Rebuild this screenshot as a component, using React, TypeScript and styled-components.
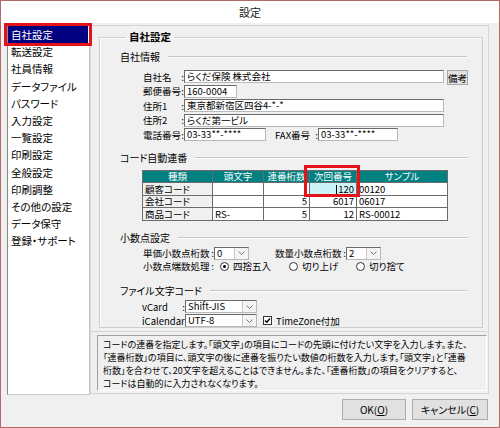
import React from "react";
import styled, { createGlobalStyle } from "styled-components";

const GlobalStyle = createGlobalStyle`
  html, body {
    margin: 0;
    padding: 0;
    background: #ffffff;
  }
  body {
    font-family: "Noto Sans CJK JP", "Noto Sans", sans-serif;
    font-size: 9.5px;
    line-height: 12px;
    color: #000;
    font-feature-settings: "palt";
  }
`;

const Window = styled.div`
  width: 500px;
  height: 428px;
  box-sizing: border-box;
  border: 1px solid #b5676a;
  background: #f0f0f0;
  display: flex;
  flex-direction: column;
`;

const TitleBar = styled.div`
  height: 22px;
  flex: none;
  background: #ffffff;
  display: flex;
  align-items: center;
  justify-content: center;
  font-size: 11px;
  color: #222;
`;

const Body = styled.div`
  display: flex;
  height: 372px;
  padding: 0 10px 0 6px;
`;

const SideList = styled.ul`
  position: relative;
  width: 83px;
  margin: 0;
  padding: 2px 0 0;
  box-sizing: border-box;
  list-style: none;
  background: #fff;
  border: 1px solid #8a8a8a;
  border-right-color: #c8c8c8;
  border-bottom-color: #c8c8c8;
  flex: none;
`;

const SideItem = styled.li<{ $active?: boolean }>`
  height: 17.2px;
  line-height: 17px;
  padding-left: 3px;
  margin-right: 1px;
  font-size: 10.5px;
  white-space: nowrap;
  background: ${({ $active }) => ($active ? "#000080" : "transparent")};
  color: ${({ $active }) => ($active ? "#fff" : "#000")};
`;

const Marker = styled.div<{ $l: number; $t: number; $w: number; $h: number }>`
  position: absolute;
  left: ${(p) => p.$l}px;
  top: ${(p) => p.$t}px;
  width: ${(p) => p.$w}px;
  height: ${(p) => p.$h}px;
  box-sizing: border-box;
  border: 3px solid #e6121a;
  pointer-events: none;
`;

const RightCol = styled.div`
  width: 399px;
  display: flex;
  flex-direction: column;
`;

const MainPanel = styled.div`
  margin-top: 2px;
  height: 307px;
  box-sizing: border-box;
  border: 1px solid #d6d6d6;
  padding: 4px 5px 4px 8px;
  display: flex;
  flex-direction: column;
`;

const GroupBox = styled.fieldset`
  flex: 1;
  margin: 0;
  min-width: 0;
  padding: 6px 15px 0 20px;
  border: 1px solid #cdcdcd;
  box-shadow: inset 1px 1px 0 #fff;
`;

const Legend = styled.legend`
  margin-left: 6px;
  padding: 0 3px;
  font-size: 10.5px;
  line-height: 14px;
  font-weight: bold;
`;

const SubHeader = styled.div<{ $mt: number }>`
  display: flex;
  align-items: center;
  height: 14px;
  margin-top: ${(p) => p.$mt}px;
  font-size: 10px;
  white-space: nowrap;
  &::after {
    content: "";
    flex: 1;
    margin-left: 8px;
    border-top: 1px solid #c4c4c4;
    border-bottom: 1px solid #ffffff;
  }
`;

const Rows = styled.div<{ $mt: number; $gap: number; $indent?: number }>`
  display: flex;
  flex-direction: column;
  gap: ${(p) => p.$gap}px;
  margin-top: ${(p) => p.$mt}px;
  padding-left: ${(p) => p.$indent ?? 23}px;
`;

const Row = styled.div<{ $h: number }>`
  display: flex;
  align-items: center;
  height: ${(p) => p.$h}px;
`;

const Label = styled.div<{ $w: number; $ml?: number }>`
  display: flex;
  justify-content: space-between;
  width: ${(p) => p.$w}px;
  margin-left: ${(p) => p.$ml ?? 0}px;
  flex: none;
  white-space: nowrap;
`;

const TextBox = styled.div<{ $w: number }>`
  width: ${(p) => p.$w}px;
  height: 13px;
  flex: none;
  box-sizing: border-box;
  background: #fff;
  border: 1px solid;
  border-color: #6a6a6a #b8b8b8 #b8b8b8 #6a6a6a;
  padding: 0 2px;
  font-size: 9.5px;
  line-height: 11px;
  white-space: nowrap;
`;

const SmallButton = styled.div`
  width: 26px;
  height: 15px;
  margin-left: 3px;
  margin-top: 2px;
  box-sizing: border-box;
  background: #e1e1e1;
  border: 1px solid #a8a8a8;
  display: flex;
  align-items: center;
  justify-content: center;
  font-size: 9.5px;
  white-space: nowrap;
`;

const TableWrap = styled.div`
  position: relative;
  margin: 5px 0 0 22px;
  width: 305px;
`;

const Grid = styled.table`
  border-collapse: collapse;
  table-layout: fixed;
  width: 305px;
`;

const Th = styled.th`
  height: 11.5px;
  padding: 0;
  background: #008080;
  color: #ffffff;
  font-weight: normal;
  font-size: 9.5px;
  line-height: 10px;
  border: 1px solid #6c6c6c;
  text-align: center;
  white-space: nowrap;
`;

const Td = styled.td<{ $align?: "left" | "right"; $bg?: string }>`
  height: 11.5px;
  padding: 0 2px;
  font-size: 9.5px;
  line-height: 10px;
  border: 1px solid #6c6c6c;
  background: ${(p) => p.$bg ?? "#fff"};
  text-align: ${(p) => p.$align ?? "left"};
  white-space: nowrap;
`;

const Caret = styled.span`
  display: inline-block;
  width: 1px;
  height: 9px;
  background: #000;
  margin-right: 1px;
  vertical-align: -1px;
`;

const Combo = styled.div<{ $w: number }>`
  width: ${(p) => p.$w}px;
  height: 13px;
  flex: none;
  box-sizing: border-box;
  display: flex;
  background: #fff;
  border: 1px solid;
  border-color: #6a6a6a #b8b8b8 #b8b8b8 #6a6a6a;
  font-size: 9.5px;
  line-height: 11px;
`;

const ComboText = styled.div`
  flex: 1;
  padding-left: 2px;
  white-space: nowrap;
`;

const ComboArrow = styled.div`
  width: 13px;
  background: #f4f4f4;
  border-left: 1px solid #c8c8c8;
  display: flex;
  align-items: center;
  justify-content: center;
`;

const Option = styled.div<{ $w: number; $ml?: number }>`
  display: flex;
  align-items: center;
  gap: 4px;
  width: ${(p) => p.$w}px;
  margin-left: ${(p) => p.$ml ?? 0}px;
  white-space: nowrap;
`;

const RadioDot = styled.span<{ $on?: boolean }>`
  width: 9px;
  height: 9px;
  box-sizing: border-box;
  border-radius: 50%;
  border: 1px solid #333;
  background: #fff;
  display: inline-flex;
  align-items: center;
  justify-content: center;
  &::after {
    content: "";
    width: 3px;
    height: 3px;
    border-radius: 50%;
    background: ${(p) => (p.$on ? "#000" : "transparent")};
  }
`;

const CheckBox = styled.span`
  width: 9px;
  height: 9px;
  box-sizing: border-box;
  border: 1px solid #333;
  background: #fff;
  display: inline-flex;
  align-items: center;
  justify-content: center;
`;

const DescPanel = styled.div`
  height: 62px;
  box-sizing: border-box;
  border: 1px solid #d6d6d6;
  border-top: none;
  padding: 3px 1px 2px 6px;
`;

const DescBox = styled.div`
  height: 100%;
  box-sizing: border-box;
  border: 1px solid;
  border-color: #a0a0a0 #ffffff #ffffff #a0a0a0;
  padding: 2px 0 0 5px;
  font-size: 9px;
  line-height: 13px;
  white-space: nowrap;
`;

const Footer = styled.div`
  flex: 1;
  display: flex;
  justify-content: flex-end;
  align-items: flex-start;
  gap: 6px;
  padding: 4px 11px 0 0;
`;

const Button = styled.div<{ $w: number }>`
  width: ${(p) => p.$w}px;
  height: 21px;
  box-sizing: border-box;
  background: #e1e1e1;
  border: 1px solid #adadad;
  display: flex;
  align-items: center;
  justify-content: center;
  font-size: 10px;
  u {
    text-decoration: underline;
  }
`;

const Chevron = () => (
  <svg width="7" height="4" viewBox="0 0 7 4">
    <path d="M0.5 0.5 L3.5 3.5 L6.5 0.5" fill="none" stroke="#777" strokeWidth="1" />
  </svg>
);

const Check = () => (
  <svg width="7" height="7" viewBox="0 0 7 7">
    <path d="M1 3.5 L2.8 5.3 L6 1.5" fill="none" stroke="#000" strokeWidth="1.4" />
  </svg>
);

const menu = [
  "自社設定",
  "転送設定",
  "社員情報",
  "データファイル",
  "パスワード",
  "入力設定",
  "一覧設定",
  "印刷設定",
  "全般設定",
  "印刷調整",
  "その他の設定",
  "データ保守",
  "登録・サポート",
];

const codes = [
  { kind: "顧客コード", prefix: "", digits: "", next: "120", sample: "00120", editing: true },
  { kind: "会社コード", prefix: "", digits: "5", next: "6017", sample: "06017" },
  { kind: "商品コード", prefix: "RS-", digits: "5", next: "12", sample: "RS-00012" },
];

const Field = ({ name }: { name: string }) => (
  <>
    <span>{name}</span>
    <span>:</span>
  </>
);

const App = () => {
  return (
    <>
      <GlobalStyle />
      <Window>
        <TitleBar>設定</TitleBar>
        <Body>
          <SideList>
            {menu.map((m, i) => (
              <SideItem key={m} $active={i === 0}>
                {m}
              </SideItem>
            ))}
            <Marker $l={-4} $t={-1} $w={88} $h={23} />
          </SideList>

          <RightCol>
            <MainPanel>
              <GroupBox>
                <Legend>自社設定</Legend>

                <SubHeader $mt={0}>自社情報</SubHeader>
                <Rows $mt={6} $gap={1}>
                  <Row $h={13.5}>
                    <Label $w={41}>
                      <Field name="自社名" />
                    </Label>
                    <TextBox $w={260}>らくだ保険 株式会社</TextBox>
                    <SmallButton>備考</SmallButton>
                  </Row>
                  <Row $h={13.5}>
                    <Label $w={41}>
                      <Field name="郵便番号" />
                    </Label>
                    <TextBox $w={53}>160-0004</TextBox>
                  </Row>
                  <Row $h={13.5}>
                    <Label $w={41}>
                      <Field name="住所1" />
                    </Label>
                    <TextBox $w={260}>東京都新宿区四谷4-*-*</TextBox>
                  </Row>
                  <Row $h={13.5}>
                    <Label $w={41}>
                      <Field name="住所2" />
                    </Label>
                    <TextBox $w={260}>らくだ第一ビル</TextBox>
                  </Row>
                  <Row $h={13.5}>
                    <Label $w={41}>
                      <Field name="電話番号" />
                    </Label>
                    <TextBox $w={82}>03-33**-****</TextBox>
                    <Label $w={43} $ml={9}>
                      <Field name="FAX番号" />
                    </Label>
                    <TextBox $w={80}>03-33**-****</TextBox>
                  </Row>
                </Rows>

                <SubHeader $mt={9}>コード自動連番</SubHeader>
                <TableWrap>
                  <Grid>
                    <colgroup>
                      <col style={{ width: 70 }} />
                      <col style={{ width: 51 }} />
                      <col style={{ width: 46 }} />
                      <col style={{ width: 47 }} />
                      <col style={{ width: 91 }} />
                    </colgroup>
                    <thead>
                      <tr>
                        <Th>種類</Th>
                        <Th>頭文字</Th>
                        <Th>連番桁数</Th>
                        <Th>次回番号</Th>
                        <Th>サンプル</Th>
                      </tr>
                    </thead>
                    <tbody>
                      {codes.map((c) => (
                        <tr key={c.kind}>
                          <Td $bg="#f0f0f0">{c.kind}</Td>
                          <Td>{c.prefix}</Td>
                          <Td $align="right">{c.digits}</Td>
                          <Td $align="right" $bg={c.editing ? "#cdf3f8" : "#fff"}>
                            {c.editing && <Caret />}
                            {c.next}
                          </Td>
                          <Td>{c.sample}</Td>
                        </tr>
                      ))}
                    </tbody>
                  </Grid>
                  <Marker $l={162} $t={-5} $w={56} $h={32} />
                </TableWrap>

                <SubHeader $mt={10}>小数点設定</SubHeader>
                <Rows $mt={2} $gap={0}>
                  <Row $h={13}>
                    <Label $w={71}>
                      <Field name="単価小数点桁数" />
                    </Label>
                    <Combo $w={35}>
                      <ComboText>0</ComboText>
                      <ComboArrow>
                        <Chevron />
                      </ComboArrow>
                    </Combo>
                    <Label $w={71} $ml={26}>
                      <Field name="数量小数点桁数" />
                    </Label>
                    <Combo $w={35}>
                      <ComboText>2</ComboText>
                      <ComboArrow>
                        <Chevron />
                      </ComboArrow>
                    </Combo>
                  </Row>
                  <Row $h={13}>
                    <Label $w={71}>
                      <Field name="小数点端数処理" />
                    </Label>
                    <Option $w={69} $ml={6}>
                      <RadioDot $on />
                      四捨五入
                    </Option>
                    <Option $w={67}>
                      <RadioDot />
                      切り上げ
                    </Option>
                    <Option $w={67}>
                      <RadioDot />
                      切り捨て
                    </Option>
                  </Row>
                </Rows>

                <SubHeader $mt={11}>ファイル文字コード</SubHeader>
                <Rows $mt={3} $gap={1.5} $indent={22}>
                  <Row $h={12.5}>
                    <Label $w={43}>
                      <Field name="vCard" />
                    </Label>
                    <Combo $w={72}>
                      <ComboText>Shift-JIS</ComboText>
                      <ComboArrow>
                        <Chevron />
                      </ComboArrow>
                    </Combo>
                  </Row>
                  <Row $h={12.5}>
                    <Label $w={43}>
                      <Field name="iCalendar" />
                    </Label>
                    <Combo $w={72}>
                      <ComboText>UTF-8</ComboText>
                      <ComboArrow>
                        <Chevron />
                      </ComboArrow>
                    </Combo>
                    <Option $w={100} $ml={6}>
                      <CheckBox>
                        <Check />
                      </CheckBox>
                      TimeZone付加
                    </Option>
                  </Row>
                </Rows>
              </GroupBox>
            </MainPanel>

            <DescPanel>
              <DescBox>
                コードの連番を指定します。「頭文字」の項目にコードの先頭に付けたい文字を入力します。また、
                <br />
                「連番桁数」の項目に、頭文字の後に連番を振りたい数値の桁数を入力します。「頭文字」と「連番
                <br />
                桁数」を合わせて、20文字を超えることはできません。また、「連番桁数」の項目をクリアすると、
                <br />
                コードは自動的に入力されなくなります。
              </DescBox>
            </DescPanel>
          </RightCol>
        </Body>

        <Footer>
          <Button $w={64}>
            OK(<u>O</u>)
          </Button>
          <Button $w={76}>
            キャンセル(<u>C</u>)
          </Button>
        </Footer>
      </Window>
    </>
  );
};

export default App;
